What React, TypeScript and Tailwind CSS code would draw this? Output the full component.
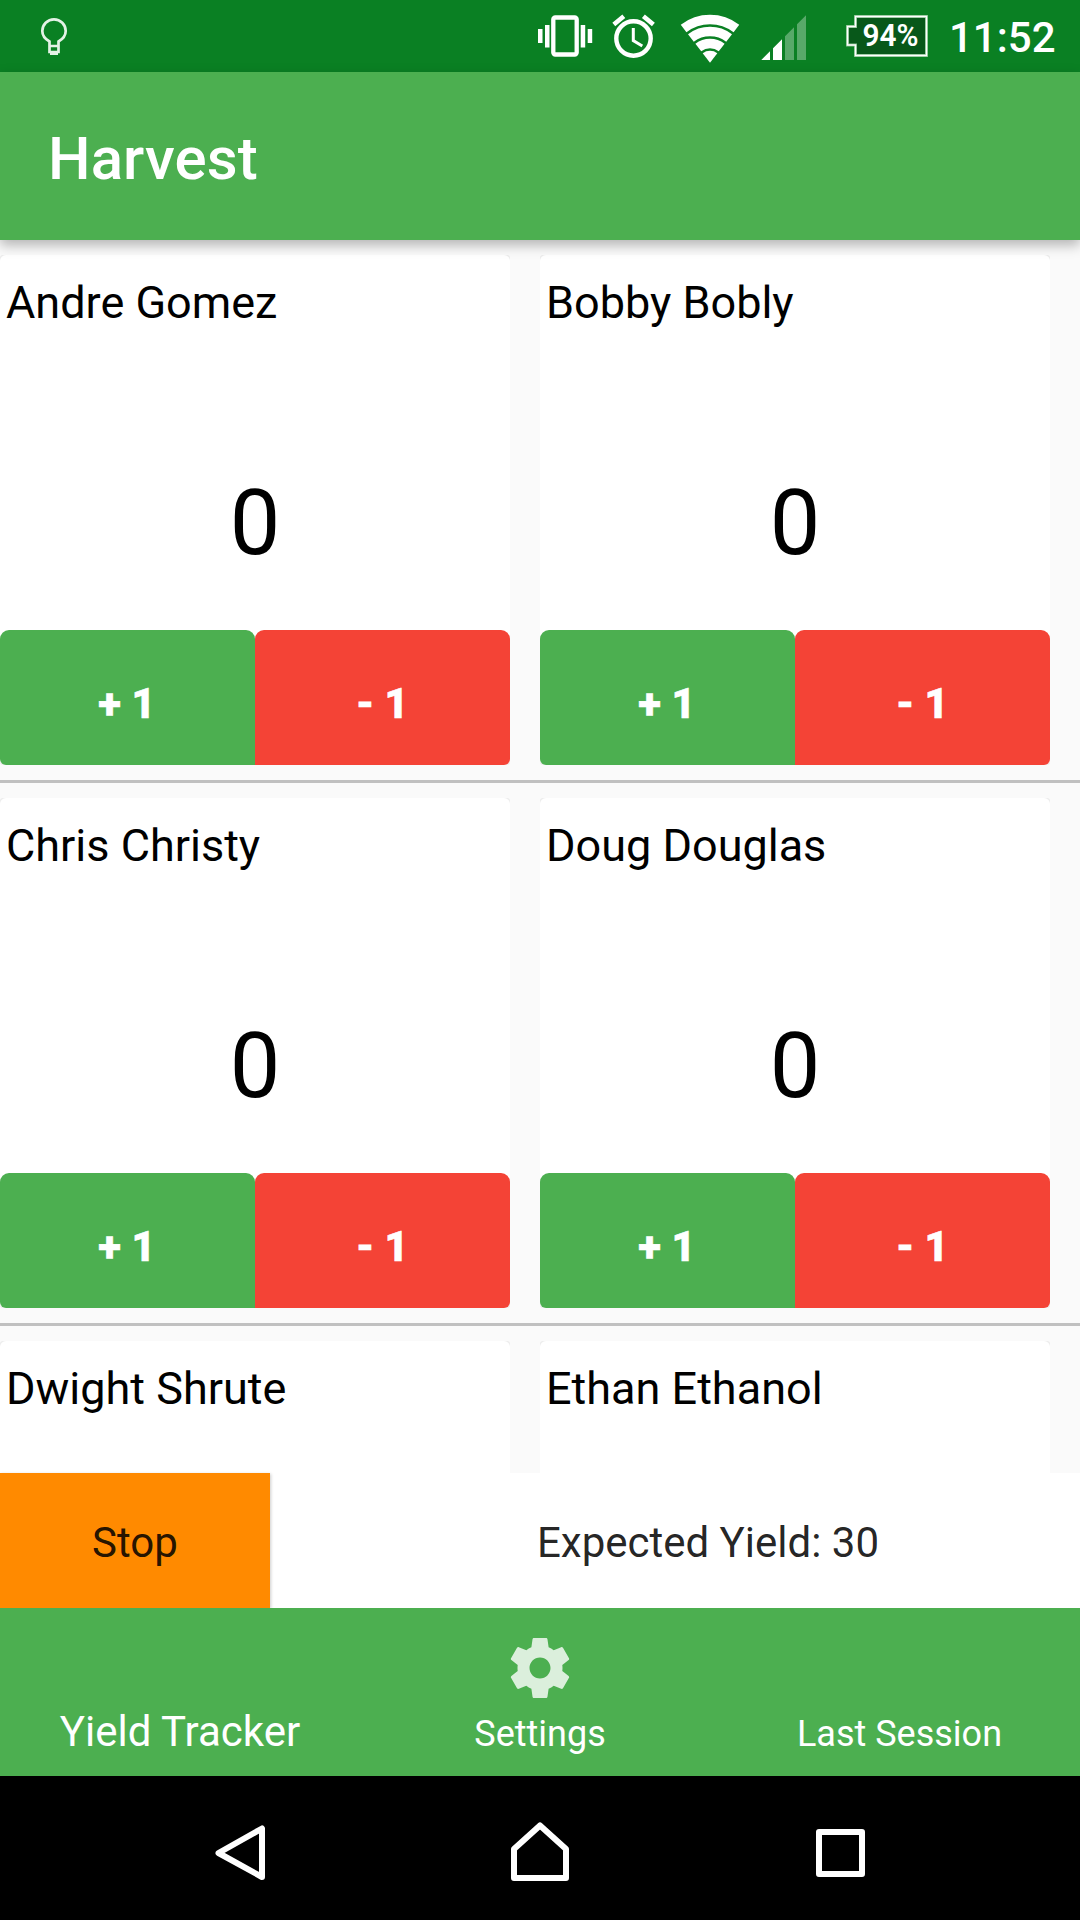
const rows = [
  ["Andre Gomez", "Bobby Bobly"],
  ["Chris Christy", "Doug Douglas"],
  ["Dwight Shrute", "Ethan Ethanol"],
];

function StatusIcons() {
  return (
    <svg className="h-[72px] w-[420px]" viewBox="520 0 420 72" fill="none">
      <g fill="#fff">
        <path d="M538 29h4.5v14H538zM545 25h4.5v22.500H545zM580.700 25h4.500v22.500h-4.500zM587.700 29h4.500v14h-4.500z" />
      </g>
      <rect x="553.300" y="17.500" width="23.400" height="37" rx="2" stroke="#fff" strokeWidth="4.300" />
      <circle cx="633.500" cy="38.500" r="17.200" stroke="#fff" strokeWidth="4.400" />
      <path d="M633.300 28v12.600l9 5.400" stroke="#fff" strokeWidth="3" />
      <path d="M613.800 24.500l10-8.200M643.400 16.300l10 8.200" stroke="#fff" strokeWidth="4.600" />
      <g stroke="#fff">
        <path d="M683.600 28.500a43.300 43.300 0 0 1 52.800 0" strokeWidth="9.300" />
        <path d="M690.900 37.900a31.400 31.400 0 0 1 38.200 0" strokeWidth="9.500" />
        <path d="M698.300 47.500a19.200 19.200 0 0 1 23.400 0" strokeWidth="9.600" />
      </g>
      <path d="M710 62.700l-7.300-9.500a12 12 0 0 1 14.600 0z" fill="#fff" />
      <path d="M761.300 60l8.700-8.700V60zM773 60V48.300l9-9V60z" fill="#fff" />
      <path d="M785 60V36.300l9-9V60zM797 60V24.300l9-9V60z" fill="#fff" fillOpacity=".32" />
      <path
        d="M855.500 16.500h71v39h-71v-10.500h-8V26.500h8z"
        fill="#08581a"
        stroke="#84bf8d"
        strokeWidth="3"
      />
      <path d="M855.500 16.500h71v39h-71v-10.500h-8V26.500h8z" stroke="#fff" strokeWidth="1.400" />
      <text
        x="862.500"
        y="46.300"
        fill="#fff"
        fontFamily="Roboto"
        fontWeight="600"
        fontSize="31"
        textLength="56"
        lengthAdjust="spacingAndGlyphs"
      >
        94%
      </text>
    </svg>
  );
}

function StatusBar() {
  return (
    <div className="flex h-[72px] shrink-0 items-center bg-[#0a8023] pr-6">
      <svg className="ml-9 h-[72px] w-9" viewBox="36 0 36 72" fill="none" stroke="#e4f2e6">
        <path
          d="M49.500 52V41.500C45 39 42.300 35.500 42.300 31a11.700 11.700 0 0 1 23.400 0c0 4.500-2.700 8-7.200 10.500V52z"
          strokeWidth="2.700"
        />
        <path d="M49 46h10M50 53.600h8" strokeWidth="2.600" />
      </svg>
      <div className="ml-auto flex items-center">
        <StatusIcons />
        <span className="ml-[9px] w-[107px] pt-1 text-[42px] leading-[68px] font-medium text-white">11:52</span>
      </div>
    </div>
  );
}

function YieldCard({ name }: { name: string }) {
  return (
    <div className="h-[510px] w-[510px] rounded-[3px] bg-[#ececec]">
      <div className="flex h-full flex-col overflow-hidden rounded-[6px] bg-white">
        <div className="h-[375px] pt-[21px]">
          <div className="pl-1.5 text-[45px] leading-[53px] text-black">{name}</div>
          <div className="mt-[142px] text-center text-[90px] leading-[106px] text-black">0</div>
        </div>
        <div className="flex h-[135px] text-[42px] font-extrabold text-white [-webkit-text-stroke:0.7px_white] [word-spacing:-1px]">
          <button className="w-[255px] rounded-t-[9px] bg-[#4caf50] pt-3 pr-px">+ 1</button>
          <button className="w-[255px] rounded-t-[9px] bg-[#f44336] pt-3">- 1</button>
        </div>
      </div>
    </div>
  );
}

export default function App() {
  return (
    <div className="flex h-[1920px] w-[1080px] flex-col overflow-hidden bg-[#fafafa] font-['Roboto',sans-serif]">
      <StatusBar />
      <header className="z-10 flex h-[168px] shrink-0 items-center bg-[#4caf50] px-12 pt-1.5 shadow-[0_5px_12px_rgba(0,0,0,0.29)]">
        <h1 className="text-[60px] font-medium tracking-[0.1px] text-white">Harvest</h1>
      </header>
      <main className="h-[1233px] shrink-0 overflow-hidden">
        {rows.map((row) => (
          <section key={row[0]} className="flex h-[543px] gap-[30px] border-b-[3px] border-[#c0c0c0] pt-[15px]">
            {row.map((name) => (
              <YieldCard key={name} name={name} />
            ))}
          </section>
        ))}
      </main>
      <div className="z-[5] flex h-[135px] shrink-0 bg-white text-[42px] text-black/87">
        <button className="w-[270px] bg-[#ff8a00] pt-1 shadow-[1px_1px_3px_rgba(0,0,0,0.2)]">Stop</button>
        <div className="flex flex-1 items-center justify-center pt-1 pl-[66px]">Expected Yield: 30</div>
      </div>
      <nav className="z-10 grid h-[168px] shrink-0 grid-cols-3 bg-[#4caf50] text-center text-white">
        <div className="flex flex-col justify-end pb-5 text-[42px] leading-[49px]">Yield Tracker</div>
        <div className="flex flex-col items-center justify-end pb-[21px] text-[36px] leading-[42px]">
          <svg className="mb-[9px] size-[72px]" viewBox="0 0 24 24" fill="#fff" fillOpacity=".8">
            <path d="M19.430 12.980c.04-.32.07-.64.07-.98s-.03-.66-.07-.98l2.110-1.650c.19-.15.24-.42.12-.64l-2-3.460c-.12-.22-.39-.3-.61-.22l-2.490 1c-.52-.4-1.080-.73-1.690-.98l-.38-2.650C14.460 2.180 14.250 2 14 2h-4c-.25 0-.46.18-.49.42l-.38 2.650c-.61.25-1.170.59-1.690.98l-2.490-1c-.23-.09-.49 0-.61.22l-2 3.460c-.13.22-.07.49.12.64l2.110 1.650c-.04.32-.07.65-.07.98s.03.66.07.98l-2.110 1.650c-.19.15-.24.42-.12.64l2 3.460c.12.22.39.3.61.22l2.490-1c.52.4 1.080.73 1.690.98l.38 2.650c.03.24.24.42.49.42h4c.25 0 .46-.18.49-.42l.38-2.650c.61-.25 1.170-.59 1.690-.98l2.490 1c.23.09.49 0 .61-.22l2-3.460c.12-.22.07-.49-.12-.64l-2.110-1.650zM12 15.500c-1.930 0-3.500-1.570-3.500-3.500s1.570-3.500 3.500-3.500 3.500 1.570 3.500 3.500-1.570 3.500-3.500 3.500z" />
          </svg>
          Settings
        </div>
        <div className="flex flex-col justify-end pr-px pb-[21px] text-[36px] leading-[42px]">Last Session</div>
      </nav>
      <div className="z-10 flex h-36 shrink-0 items-center justify-center gap-[228px] bg-black">
        <svg className="size-[72px]" viewBox="0 0 72 72" fill="none" stroke="#fff" strokeWidth="6" strokeLinejoin="round">
          <path d="M58 16.500v48.500L14.500 41z" />
        </svg>
        <svg className="size-[72px]" viewBox="0 0 72 72" fill="none" stroke="#fff" strokeWidth="6" strokeLinejoin="round">
          <path d="M10 66V37L36 13.500 62 37V66z" />
        </svg>
        <svg className="size-[72px]" viewBox="0 0 72 72" fill="none" stroke="#fff" strokeWidth="6" strokeLinejoin="round">
          <path d="M15 20h43v42H15z" />
        </svg>
      </div>
    </div>
  );
}
